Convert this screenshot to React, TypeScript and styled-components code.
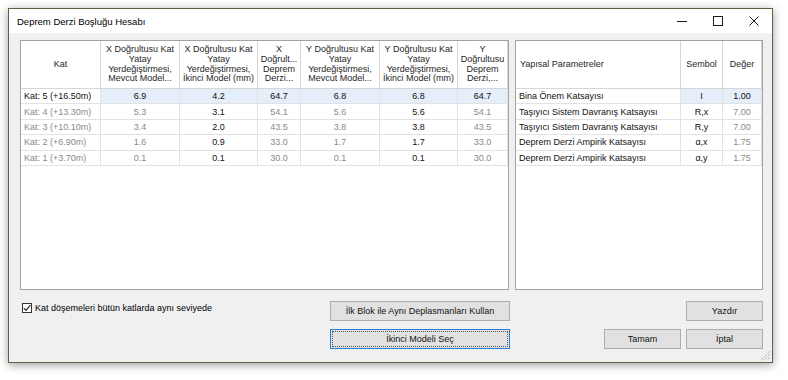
import React from 'react';
import styled, { createGlobalStyle } from 'styled-components';

const GlobalStyle = createGlobalStyle`
  html, body { margin: 0; padding: 0; background: #ffffff; }
  body { font-family: "Liberation Sans", Arial, sans-serif; }
  * { box-sizing: border-box; }
`;

const Page = styled.div`
  width: 788px;
  height: 380px;
  padding: 8px 0 0 8px;
  background: #ffffff;
`;

const Window = styled.div`
  position: relative;
  width: 765px;
  height: 355px;
  border: 1px solid #53663f;
  background: #f0f0f0;
  display: flex;
  flex-direction: column;
  box-shadow: 0 2px 9px rgba(0, 0, 0, 0.38);
`;

const TitleBar = styled.div`
  height: 24px;
  background: #ffffff;
  display: flex;
  align-items: center;
  padding-left: 8px;
`;

const Title = styled.span`
  flex: 1;
  font-size: 9.5px;
  color: #000;
`;

const Caption = styled.div`
  width: 36px;
  height: 24px;
  display: flex;
  align-items: center;
  justify-content: center;
  color: #1a1a1a;
`;

const Body = styled.div`
  flex: 1;
  padding: 7px 9px 0 11px;
  display: flex;
  flex-direction: column;
`;

const Panels = styled.div`
  display: flex;
  gap: 6px;
  height: 250px;
`;

const Panel = styled.div<{ $w: number }>`
  width: ${p => p.$w}px;
  border: 1px solid #a3a3a3;
  background: #ffffff;
  overflow: hidden;
`;

const Table = styled.div<{ $cols: string }>`
  display: grid;
  grid-template-columns: ${p => p.$cols};
  grid-template-rows: 48px;
  grid-auto-rows: 15.4px;
  font-size: 9px;
`;

const Head = styled.div<{ $left?: boolean }>`
  display: flex;
  align-items: center;
  justify-content: ${p => (p.$left ? 'flex-start' : 'center')};
  text-align: ${p => (p.$left ? 'left' : 'center')};
  padding: 0 ${p => (p.$left ? '4px' : '2px')};
  line-height: 9.6px;
  color: #262626;
  border-right: 1px solid #d6d6d6;
  border-bottom: 1px solid #d6d6d6;
  white-space: pre-line;
  overflow: hidden;
`;

const Cell = styled.div<{ $left?: boolean; $dark?: boolean; $sel?: boolean }>`
  display: flex;
  align-items: center;
  justify-content: ${p => (p.$left ? 'flex-start' : 'center')};
  padding: 0 3px;
  color: ${p => (p.$dark ? '#111111' : '#8a8a8a')};
  background: ${p => (p.$sel ? '#e4eff9' : '#ffffff')};
  border-right: 1px solid #e2e2e2;
  border-bottom: 1px solid #e2e2e2;
  white-space: nowrap;
  overflow: hidden;
`;

const Bottom = styled.div`
  margin-top: 11px;
  display: grid;
  grid-template-columns: 310px 180px 1fr;
`;

const CheckRow = styled.label`
  display: flex;
  align-items: flex-start;
  gap: 3px;
  padding: 2px 0 0 2px;
  font-size: 9px;
  color: #000;
`;

const Box = styled.span`
  width: 10px;
  height: 10px;
  border: 1px solid #333;
  background: #fff;
  display: flex;
  align-items: center;
  justify-content: center;
`;

const Stack = styled.div<{ $end?: boolean }>`
  display: flex;
  flex-direction: column;
  align-items: ${p => (p.$end ? 'flex-end' : 'stretch')};
  gap: 8px;
`;

const ButtonRow = styled.div`
  display: flex;
  gap: 5px;
`;

const Button = styled.button<{ $w?: number; $focus?: boolean }>`
  width: ${p => (p.$w ? `${p.$w}px` : '100%')};
  height: 20px;
  padding: 0;
  font-family: "Liberation Sans", Arial, sans-serif;
  font-size: 9px;
  font-weight: 400;
  color: #111;
  background: #e1e1e1;
  border: 1px solid ${p => (p.$focus ? '#2a7fd4' : '#adadad')};
  outline: ${p => (p.$focus ? '1px dotted #555' : 'none')};
  outline-offset: -3px;
`;

const Grip = styled.svg`
  position: absolute;
  right: 1px;
  bottom: 1px;
`;

const leftCols = '80px 79px 78px 43px 79px 78px 50px';
const rightCols = '165px 42px 39px';

const leftHeads = [
  'Kat',
  'X Doğrultusu Kat\nYatay\nYerdeğiştirmesi,\nMevcut Model...',
  'X Doğrultusu Kat\nYatay\nYerdeğiştirmesi,\nİkinci Model (mm)',
  'X\nDoğrult...\nDeprem\nDerzi...',
  'Y Doğrultusu Kat\nYatay\nYerdeğiştirmesi,\nMevcut Model...',
  'Y Doğrultusu Kat\nYatay\nYerdeğiştirmesi,\nİkinci Model (mm)',
  'Y\nDoğrultusu\nDeprem\nDerzi,...',
];

const floors = [
  ['Kat: 5 (+16.50m)', '6.9', '4.2', '64.7', '6.8', '6.8', '64.7'],
  ['Kat: 4 (+13.30m)', '5.3', '3.1', '54.1', '5.6', '5.6', '54.1'],
  ['Kat: 3 (+10.10m)', '3.4', '2.0', '43.5', '3.8', '3.8', '43.5'],
  ['Kat: 2 (+6.90m)', '1.6', '0.9', '33.0', '1.7', '1.7', '33.0'],
  ['Kat: 1 (+3.70m)', '0.1', '0.1', '30.0', '0.1', '0.1', '30.0'],
];

const params = [
  ['Bina Önem Katsayısı', 'I', '1.00'],
  ['Taşıyıcı Sistem Davranış Katsayısı', 'R,x', '7.00'],
  ['Taşıyıcı Sistem Davranış Katsayısı', 'R,y', '7.00'],
  ['Deprem Derzi Ampirik Katsayısı', 'α,x', '1.75'],
  ['Deprem Derzi Ampirik Katsayısı', 'α,y', '1.75'],
];

// columns shown in black text (second model values)
const darkCols = [2, 5];

const App: React.FC = () => {
  return (
    <Page>
      <GlobalStyle />
      <Window>
        <TitleBar>
          <Title>Deprem Derzi Boşluğu Hesabı</Title>
          <Caption>
            <svg width="10" height="10" viewBox="0 0 10 10">
              <line x1="0" y1="5.5" x2="10" y2="5.5" stroke="currentColor" strokeWidth="1" />
            </svg>
          </Caption>
          <Caption>
            <svg width="10" height="10" viewBox="0 0 10 10">
              <rect x="0.5" y="0.5" width="9" height="9" fill="none" stroke="currentColor" strokeWidth="1" />
            </svg>
          </Caption>
          <Caption>
            <svg width="10" height="10" viewBox="0 0 10 10">
              <path d="M0.5 0.5 L9.5 9.5 M9.5 0.5 L0.5 9.5" stroke="currentColor" strokeWidth="1" />
            </svg>
          </Caption>
        </TitleBar>

        <Body>
          <Panels>
            <Panel $w={489}>
              <Table $cols={leftCols}>
                {leftHeads.map((h, i) => (
                  <Head key={i}>{h}</Head>
                ))}
                {floors.map((row, r) =>
                  row.map((v, c) => (
                    <Cell
                      key={`${r}-${c}`}
                      $left={c === 0}
                      $dark={r === 0 || darkCols.includes(c)}
                      $sel={r === 0 && c > 0}
                    >
                      {v}
                    </Cell>
                  ))
                )}
              </Table>
            </Panel>

            <Panel $w={248}>
              <Table $cols={rightCols}>
                <Head $left>Yapısal Parametreler</Head>
                <Head>Sembol</Head>
                <Head>Değer</Head>
                {params.map((row, r) =>
                  row.map((v, c) => (
                    <Cell
                      key={`${r}-${c}`}
                      $left={c === 0}
                      $dark={c < 2 || r === 0}
                      $sel={r === 0 && c > 0}
                    >
                      {v}
                    </Cell>
                  ))
                )}
              </Table>
            </Panel>
          </Panels>

          <Bottom>
            <div>
              <CheckRow>
                <Box>
                  <svg width="8" height="8" viewBox="0 0 8 8">
                    <path d="M0.8 4.2 L3 6.4 L7.3 1.2" fill="none" stroke="#222" strokeWidth="1.1" />
                  </svg>
                </Box>
                Kat döşemeleri bütün katlarda aynı seviyede
              </CheckRow>
            </div>
            <Stack>
              <Button>İlk Blok ile Aynı Deplasmanları Kullan</Button>
              <Button $focus>İkinci Modeli Seç</Button>
            </Stack>
            <Stack $end>
              <Button $w={77}>Yazdır</Button>
              <ButtonRow>
                <Button $w={77}>Tamam</Button>
                <Button $w={77}>İptal</Button>
              </ButtonRow>
            </Stack>
          </Bottom>
        </Body>

        <Grip width="12" height="12" viewBox="0 0 12 12">
          <path d="M11 2 L2 11 M11 5 L5 11 M11 8 L8 11" stroke="#9a9a9a" strokeWidth="1" strokeDasharray="1 1" />
        </Grip>
      </Window>
    </Page>
  );
};

export default App;
